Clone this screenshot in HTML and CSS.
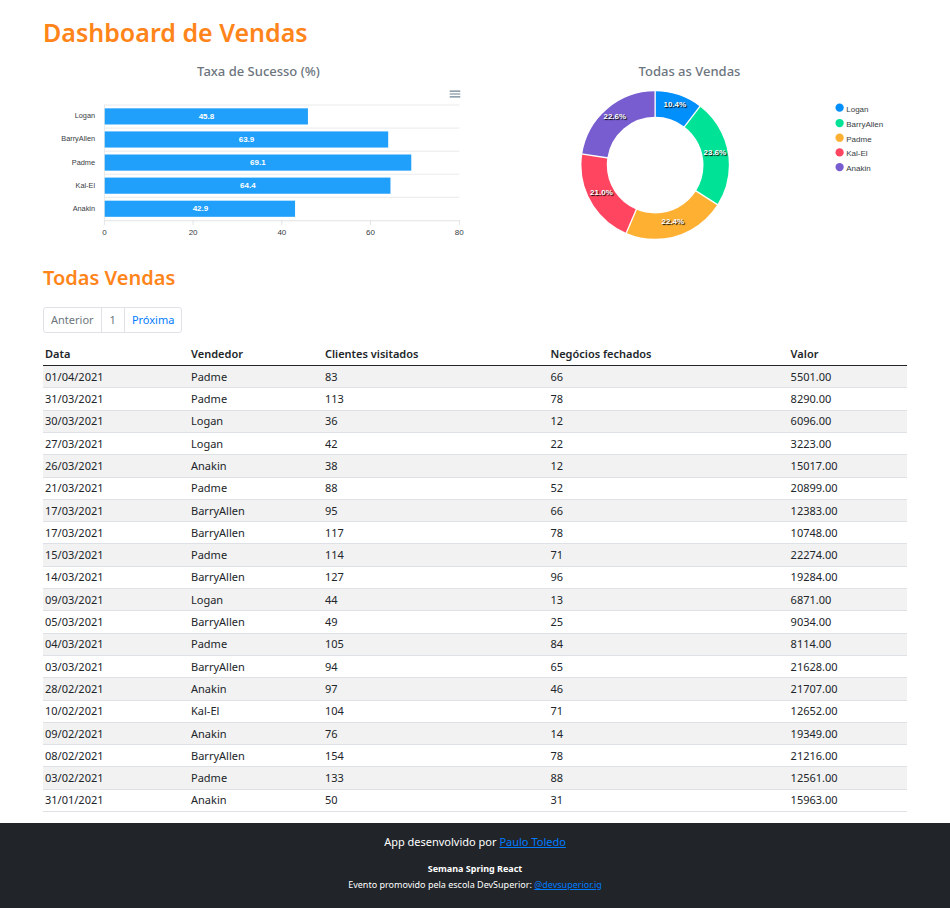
FILE: index.html
```html
<!DOCTYPE html>
<html lang="pt-BR">
<head>
<meta charset="utf-8">
<meta name="viewport" content="width=device-width, initial-scale=1">
<title>Dashboard de Vendas</title>
<link rel="stylesheet" href="styles.css">
</head>
<body>
<main class="container">
  <h1 class="page-title">Dashboard de Vendas</h1>

  <div class="charts">
    <section class="chart">
      <h2 class="chart-title">Taxa de Sucesso (%)</h2>
      <div class="toolbar">
        <button class="menu-button" type="button" aria-label="Menu">
          <svg class="menu-icon" viewBox="0 0 24 24" aria-hidden="true"><path d="M3 18h18v-2H3v2zm0-5h18v-2H3v2zm0-7v2h18V6H3z"/></svg>
        </button>
      </div>
      <svg class="plot" viewBox="0 0 646 210" role="img" aria-label="Taxa de Sucesso (%)">
        <path class="grid-line" d="M92 6H624M92 40.6H624M92 75.2H624M92 109.8H624M92 144.4H624M92 5V179"/>
        <path class="axis-line" d="M92 179.5H625M92 179V186M225 179V186M358 179V186M491 179V186M624.5 179V186"/>
        <g class="bar">
          <rect x="92.5" y="11" width="304.6" height="24.2"/>
          <rect x="92.5" y="45.6" width="424.9" height="24.2"/>
          <rect x="92.5" y="80.2" width="459.5" height="24.2"/>
          <rect x="92.5" y="114.8" width="428.3" height="24.2"/>
          <rect x="92.5" y="149.4" width="285.3" height="24.2"/>
        </g>
        <g class="bar-value">
          <text x="245" y="27">45.8</text>
          <text x="305" y="61.6">63.9</text>
          <text x="322" y="96.2">69.1</text>
          <text x="307" y="130.8">64.4</text>
          <text x="236" y="165.4">42.9</text>
        </g>
        <g class="category">
          <text x="78" y="26">Logan</text>
          <text x="78" y="60.6">BarryAllen</text>
          <text x="78" y="95.2">Padme</text>
          <text x="78" y="129.8">Kal-El</text>
          <text x="78" y="164.4">Anakin</text>
        </g>
        <g class="tick">
          <text x="92" y="201">0</text>
          <text x="225" y="201">20</text>
          <text x="358" y="201">40</text>
          <text x="491" y="201">60</text>
          <text x="624" y="201">80</text>
        </g>
      </svg>
    </section>

    <section class="chart">
      <h2 class="chart-title">Todas as Vendas</h2>
      <svg class="plot" viewBox="0 0 646 231" role="img" aria-label="Todas as Vendas">
        <g transform="translate(271.5 117)">
          <g class="ring" transform="rotate(-90)">
            <circle class="c1" r="91.5" pathLength="100" stroke-dasharray="10.4 89.6"/>
            <circle class="c2" r="91.5" pathLength="100" stroke-dasharray="23.6 76.4" stroke-dashoffset="-10.4"/>
            <circle class="c3" r="91.5" pathLength="100" stroke-dasharray="22.4 77.6" stroke-dashoffset="-34"/>
            <circle class="c4" r="91.5" pathLength="100" stroke-dasharray="21 79" stroke-dashoffset="-56.4"/>
            <circle class="c5" r="91.5" pathLength="100" stroke-dasharray="22.6 77.4" stroke-dashoffset="-77.4"/>
          </g>
          <g class="separator">
            <path d="M0-71V-112"/>
            <path d="M0-71V-112" transform="rotate(37.4)"/>
            <path d="M0-71V-112" transform="rotate(122.4)"/>
            <path d="M0-71V-112" transform="rotate(203)"/>
            <path d="M0-71V-112" transform="rotate(278.6)"/>
          </g>
        </g>
        <g class="slice-value">
          <text x="301" y="30">10.4%</text>
          <text x="361" y="102">23.6%</text>
          <text x="298" y="206">22.4%</text>
          <text x="191" y="162">21.0%</text>
          <text x="211" y="48">22.6%</text>
        </g>
        <g class="legend">
          <circle class="f1" cx="548" cy="31" r="6.2"/><text x="558" y="38">Logan</text>
          <circle class="f2" cx="548" cy="54" r="6.2"/><text x="558" y="60">BarryAllen</text>
          <circle class="f3" cx="548" cy="76" r="6.2"/><text x="558" y="82">Padme</text>
          <circle class="f4" cx="548" cy="98" r="6.2"/><text x="558" y="104">Kal-El</text>
          <circle class="f5" cx="548" cy="120" r="6.2"/><text x="558" y="126">Anakin</text>
        </g>
      </svg>
    </section>
  </div>

  <h2 class="section-title">Todas Vendas</h2>

  <nav class="pagination" aria-label="Paginação">
    <button class="page" type="button" disabled>Anterior</button>
    <span class="page number">1</span>
    <button class="page next" type="button">Próxima</button>
  </nav>

  <table class="sales">
    <thead>
      <tr><th class="date">Data</th><th class="seller">Vendedor</th><th class="visited">Clientes visitados</th><th class="deals">Negócios fechados</th><th>Valor</th></tr>
    </thead>
    <tbody>
      <tr><td>01/04/2021</td><td>Padme</td><td>83</td><td>66</td><td>5501.00</td></tr>
      <tr><td>31/03/2021</td><td>Padme</td><td>113</td><td>78</td><td>8290.00</td></tr>
      <tr><td>30/03/2021</td><td>Logan</td><td>36</td><td>12</td><td>6096.00</td></tr>
      <tr><td>27/03/2021</td><td>Logan</td><td>42</td><td>22</td><td>3223.00</td></tr>
      <tr><td>26/03/2021</td><td>Anakin</td><td>38</td><td>12</td><td>15017.00</td></tr>
      <tr><td>21/03/2021</td><td>Padme</td><td>88</td><td>52</td><td>20899.00</td></tr>
      <tr><td>17/03/2021</td><td>BarryAllen</td><td>95</td><td>66</td><td>12383.00</td></tr>
      <tr><td>17/03/2021</td><td>BarryAllen</td><td>117</td><td>78</td><td>10748.00</td></tr>
      <tr><td>15/03/2021</td><td>Padme</td><td>114</td><td>71</td><td>22274.00</td></tr>
      <tr><td>14/03/2021</td><td>BarryAllen</td><td>127</td><td>96</td><td>19284.00</td></tr>
      <tr><td>09/03/2021</td><td>Logan</td><td>44</td><td>13</td><td>6871.00</td></tr>
      <tr><td>05/03/2021</td><td>BarryAllen</td><td>49</td><td>25</td><td>9034.00</td></tr>
      <tr><td>04/03/2021</td><td>Padme</td><td>105</td><td>84</td><td>8114.00</td></tr>
      <tr><td>03/03/2021</td><td>BarryAllen</td><td>94</td><td>65</td><td>21628.00</td></tr>
      <tr><td>28/02/2021</td><td>Anakin</td><td>97</td><td>46</td><td>21707.00</td></tr>
      <tr><td>10/02/2021</td><td>Kal-El</td><td>104</td><td>71</td><td>12652.00</td></tr>
      <tr><td>09/02/2021</td><td>Anakin</td><td>76</td><td>14</td><td>19349.00</td></tr>
      <tr><td>08/02/2021</td><td>BarryAllen</td><td>154</td><td>78</td><td>21216.00</td></tr>
      <tr><td>03/02/2021</td><td>Padme</td><td>133</td><td>88</td><td>12561.00</td></tr>
      <tr><td>31/01/2021</td><td>Anakin</td><td>50</td><td>31</td><td>15963.00</td></tr>
    </tbody>
  </table>
</main>

<footer class="footer">
  <p class="author">App desenvolvido por <a href="#">Paulo Toledo</a></p>
  <p class="event"><strong>Semana Spring React</strong></p>
  <p class="event">Evento promovido pela escola DevSuperior: <a href="#">@devsuperior.ig</a></p>
</footer>
</body>
</html>
```
FILE: styles.css
```css
* { box-sizing: border-box; }

body {
  display: flex;
  flex-direction: column;
  min-height: 100vh;
  margin: 0;
  background: #fff;
  color: #212529;
  font: 11px/16px "Noto Sans", "Open Sans", sans-serif;
}

h1, h2, p { margin: 0; }

.container { padding: 16px 43px 11px; }

.page-title {
  color: #ff851b;
  font-size: 25px;
  font-weight: 600;
  line-height: 32px;
}

.charts {
  display: grid;
  grid-template-columns: 1fr 1fr;
  margin-top: 15px;
  padding-right: 2px;
}

.chart-title {
  margin-bottom: 8px;
  color: #6c757d;
  font-size: 13px;
  font-weight: 500;
  line-height: 16px;
  text-align: center;
}

.toolbar {
  display: flex;
  justify-content: flex-end;
  padding-right: 12px;
}

.menu-button {
  padding: 0;
  border: 0;
  background: none;
  line-height: 0;
}

.menu-icon { width: 14px; height: 14px; fill: #6e8192; }

.plot {
  display: block;
  width: 100%;
  font-family: "Liberation Sans", Arial, sans-serif;
  font-size: 12px;
}

.grid-line { fill: none; stroke: #e0e0e0; }
.axis-line { fill: none; stroke: #d6d6d6; }
.bar { fill: #209ffb; }
.bar-value { fill: #fff; font-weight: 700; text-anchor: middle; }
.category { fill: #373d3f; font-size: 11px; text-anchor: end; }
.tick { fill: #373d3f; text-anchor: middle; }

.ring { fill: none; stroke-width: 38px; }
.c1 { stroke: #008ffb; }
.c2 { stroke: #00e396; }
.c3 { stroke: #feb033; }
.c4 { stroke: #ff4560; }
.c5 { stroke: #775dd0; }
.separator { stroke: #fff; stroke-width: 2px; }

.slice-value {
  fill: #fff;
  font-weight: 700;
  text-anchor: middle;
  text-shadow: 1px 1px 1px #000;
}

.legend { fill: #373d3f; }
.f1 { fill: #008ffb; }
.f2 { fill: #00e396; }
.f3 { fill: #feb033; }
.f4 { fill: #ff4560; }
.f5 { fill: #775dd0; }

.section-title {
  margin-top: 23px;
  color: #ff851b;
  font-size: 20px;
  font-weight: 600;
  line-height: 28px;
}

.pagination { display: flex; margin: 15px 0 10px; }

.page {
  padding: 4px 7px;
  border: 1px solid #dee2e6;
  background: #fff;
  color: #6c757d;
  font: inherit;
}

.page + .page { margin-left: -1px; }
.page:first-child { border-radius: 3px 0 0 3px; }
.page:last-child { border-radius: 0 3px 3px 0; }
.page.number { padding: 4px 8px; }
.page.next { color: #007bff; }

.sales {
  width: 100%;
  height: 469px;
  border-collapse: collapse;
  table-layout: fixed;
}

.sales th, .sales td {
  padding: 2px;
  border-bottom: 1px solid #dee2e6;
  text-align: left;
}

.sales th {
  padding: 3px 2px;
  border-bottom-color: #212529;
  font-weight: 600;
}

.sales tbody tr:nth-child(odd) { background: #f2f2f2; }
.date { width: 16.9%; }
.seller { width: 15.5%; }
.visited { width: 26.1%; }
.deals { width: 27.8%; }

.footer {
  flex: 1;
  padding: 11px 0 16px;
  background: #212529;
  color: #fff;
  text-align: center;
}

.author { margin-bottom: 11px; }
.event { font-size: 9px; }
.footer a { color: #007bff; text-decoration: underline; }
```
